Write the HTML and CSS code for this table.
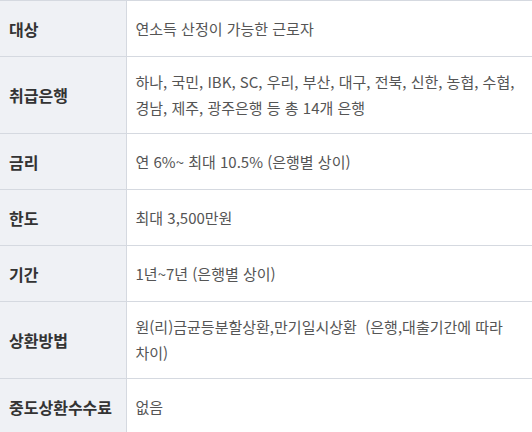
FILE: index.html
```html
<!DOCTYPE html>
<html lang="ko">
<head>
<meta charset="utf-8">
<link rel="stylesheet" href="styles.css">
</head>
<body>
<table class="info">
  <tbody>
    <tr><th>대상</th><td>연소득 산정이 가능한 근로자</td></tr>
    <tr><th>취급은행</th><td>하나, 국민, IBK, SC, 우리, 부산, 대구, 전북, 신한, 농협, 수협, 경남, 제주, 광주은행 등 총 14개 은행</td></tr>
    <tr><th>금리</th><td>연 6%~ 최대 10.5% (은행별 상이)</td></tr>
    <tr><th>한도</th><td>최대 3,500만원</td></tr>
    <tr><th>기간</th><td>1년~7년 (은행별 상이)</td></tr>
    <tr><th>상환방법</th><td>원(리)금균등분할상환,만기일시상환&nbsp; (은행,대출기간에 따라 차이)</td></tr>
    <tr><th>중도상환수수료</th><td>없음</td></tr>
  </tbody>
</table>
</body>
</html>
```
FILE: styles.css
```css
html, body {
  margin: 0;
  padding: 0;
  background: #ffffff;
}
body {
  font-family: "Noto Sans CJK KR", "Noto Sans", sans-serif;
}
.info {
  width: 532px;
  border-collapse: collapse;
  table-layout: fixed;
}
.info th,
.info td {
  border-top: 1px solid #d5d9e0;
  border-bottom: 1px solid #d5d9e0;
  height: 56px;
  box-sizing: border-box;
  vertical-align: middle;
  line-height: 26px;
}
.info th {
  width: 126px;
  background: #eff1f5;
  border-right: 1px solid #d5d9e0;
  color: #333333;
  font-size: 16px;
  font-weight: 700;
  text-align: left;
  padding: 12px 0 12px 9px;
  white-space: nowrap;
}
.info td {
  color: #555555;
  font-size: 15px;
  font-weight: 400;
  padding: 12px 9px 12px 9px;
  word-break: keep-all;
}
```
